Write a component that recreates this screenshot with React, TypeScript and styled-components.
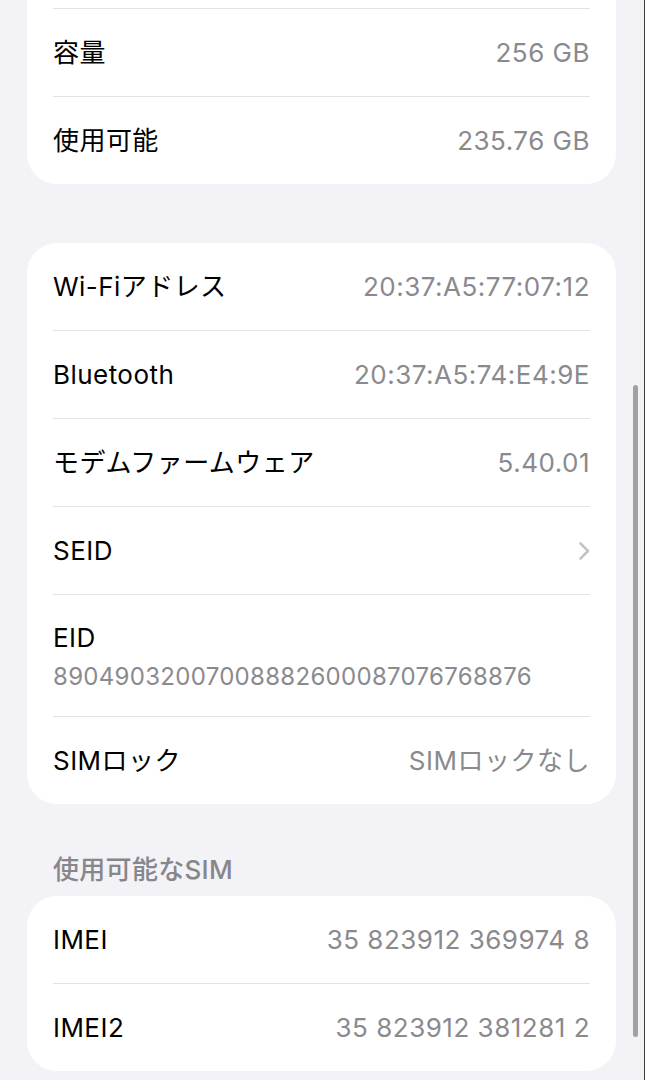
import styled, { createGlobalStyle } from "styled-components";

const GlobalStyle = createGlobalStyle`
  html, body {
    margin: 0;
    padding: 0;
    background: #f2f2f7;
  }
  body {
    font-family: Inter, "Noto Sans CJK JP", "Noto Sans", sans-serif;
    -webkit-font-smoothing: antialiased;
  }
`;

const Page = styled.div`
  position: relative;
  box-sizing: border-box;
  width: 645px;
  height: 1080px;
  overflow: hidden;
  padding: 0 28px 0 27px;
  border-right: 1px solid #3c3c3c;
  display: flex;
  flex-direction: column;
`;

const Card = styled.div<{ $offset?: number }>`
  background: #ffffff;
  border-radius: 30px;
  margin-top: ${(p) => p.$offset ?? 0}px;
  display: flex;
  flex-direction: column;
`;

const Row = styled.div<{ $first?: boolean }>`
  margin: 0 26px;
  display: flex;
  align-items: center;
  justify-content: space-between;
  border-top: ${(p) => (p.$first ? "none" : "1px solid #e2e2e6")};
  height: ${(p) => (p.$first ? 87 : 88)}px;
  box-sizing: border-box;
`;

const StackRow = styled.div`
  margin: 0 26px;
  border-top: 1px solid #e2e2e6;
  padding: 26px 0 24px;
  display: flex;
  flex-direction: column;
`;

const Label = styled.span`
  font-size: 26px;
  line-height: 34px;
  color: #000000;
  letter-spacing: 0.45px;
`;

const Value = styled.span<{ $small?: boolean }>`
  font-size: ${(p) => (p.$small ? 24 : 26)}px;
  line-height: ${(p) => (p.$small ? 30 : 34)}px;
  color: #8a8a8e;
  letter-spacing: ${(p) => (p.$small ? 0.3 : 0.5)}px;
  margin-top: ${(p) => (p.$small ? 7 : 0)}px;
`;

const SectionHeader = styled.div`
  margin: 49px 0 9px 26px;
  font-size: 26px;
  line-height: 34px;
  font-weight: 500;
  color: #86868b;
  letter-spacing: 0.3px;
`;

const Chevron = styled.svg`
  width: 13px;
  height: 20px;
  margin-right: -1px;
`;

const ScrollIndicator = styled.div`
  position: absolute;
  left: 633px;
  top: 385px;
  width: 5px;
  height: 652px;
  border-radius: 3px;
  background: #a1a1a5;
`;

type Item = { label: string; value?: string; chevron?: boolean; stacked?: boolean };

const storage: Item[] = [
  { label: "", value: "" },
  { label: "容量", value: "256 GB" },
  { label: "使用可能", value: "235.76 GB" },
];

const network: Item[] = [
  { label: "Wi-Fiアドレス", value: "20:37:A5:77:07:12" },
  { label: "Bluetooth", value: "20:37:A5:74:E4:9E" },
  { label: "モデムファームウェア", value: "5.40.01" },
  { label: "SEID", chevron: true },
  { label: "EID", value: "89049032007008882600087076768876", stacked: true },
  { label: "SIMロック", value: "SIMロックなし" },
];

const sims: Item[] = [
  { label: "IMEI", value: "35 823912 369974 8" },
  { label: "IMEI2", value: "35 823912 381281 2" },
];

function renderRows(items: Item[]) {
  return items.map((item, i) =>
    item.stacked ? (
      <StackRow key={item.label}>
        <Label>{item.label}</Label>
        <Value $small>{item.value}</Value>
      </StackRow>
    ) : (
      <Row key={item.label + i} $first={i === 0}>
        <Label>{item.label}</Label>
        {item.chevron ? (
          <Chevron viewBox="0 0 13 20" fill="none">
            <path d="M2.5 2.5 L10 10 L2.5 17.5" stroke="#c4c4c7" strokeWidth="2.6" strokeLinecap="round" strokeLinejoin="round" />
          </Chevron>
        ) : (
          <Value>{item.value}</Value>
        )}
      </Row>
    )
  );
}

function App() {
  return (
    <Page>
      <GlobalStyle />
      <Card $offset={-79}>{renderRows(storage)}</Card>
      <Card $offset={59}>{renderRows(network)}</Card>
      <SectionHeader>使用可能なSIM</SectionHeader>
      <Card>{renderRows(sims)}</Card>
      <ScrollIndicator />
    </Page>
  );
}

export default App;
